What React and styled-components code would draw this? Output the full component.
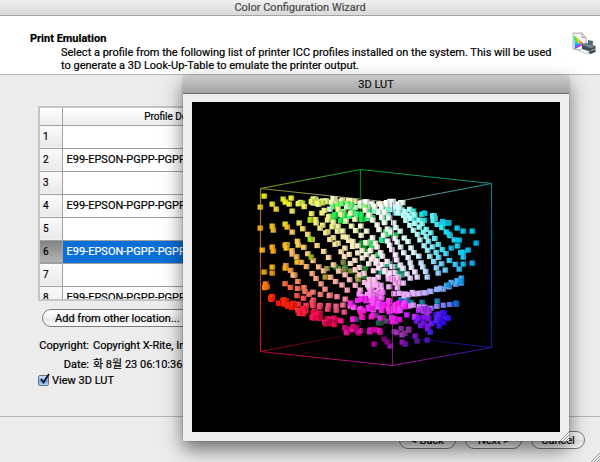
import React, { useState } from "react";
import styled, { createGlobalStyle } from "styled-components";

const GlobalStyle = createGlobalStyle`
    * {
        box-sizing: border-box;
    }

    body {
        margin: 0;
        background: #ececec;
        color: #000;
        font-family: Roboto, "Noto Sans CJK KR", sans-serif;
        font-size: 11px;
        line-height: 13px;
        -webkit-text-stroke: 0.2px;
    }
`;

const Wizard = styled.div`
    position: relative;
    display: flex;
    flex-direction: column;
    min-height: 100vh;
    overflow: hidden;
`;

const TitleBar = styled.header`
    height: ${(props) => (props.$inactive ? "16px" : "18px")};
    line-height: ${(props) => (props.$inactive ? "16px" : "18px")};
    text-align: center;
    color: ${(props) => (props.$inactive ? "#4a4a4a" : "#111")};
    background: ${(props) =>
        props.$inactive
            ? "linear-gradient(#efefef, #d9d9d9)"
            : "linear-gradient(#c9c9c9, #a4a4a4)"};
    border-bottom: 1px solid ${(props) => (props.$inactive ? "#a3a3a3" : "#6e6e6e")};
`;

const Intro = styled.section`
    display: flex;
    justify-content: space-between;
    padding: 16px 4px 2px 30px;
    height: 59px;
    background: #fff;
    border-bottom: 1px solid #b4b4b4;
`;

const IntroTitle = styled.h1`
    margin: 0;
    font-size: 11px;
    line-height: 13px;
`;

const IntroText = styled.p`
    margin: 1px 0 0 31px;
    max-width: 498px;
`;

const Content = styled.main`
    flex: 1;
    padding: 31px 38px 0;
    border-bottom: 1px solid #b4b4b4;
`;

const TableFrame = styled.div`
    height: 195px;
    overflow: hidden;
    border: 2px solid #c4c4c4;
    background: #fff;
`;

const Table = styled.table`
    width: 100%;
    border-collapse: collapse;
    table-layout: fixed;
`;

const HeadCell = styled.th`
    width: ${(props) => props.$width || "auto"};
    height: 17px;
    padding: 0;
    font-size: 10px;
    font-weight: 400;
    background: linear-gradient(#fff, #ececec);
    border-right: 1px solid #a0a0a0;
    border-bottom: 1px solid #a0a0a0;
`;

const RowNumber = styled.th`
    height: 23px;
    padding: 0 0 0 3px;
    font-size: 10px;
    font-weight: 400;
    text-align: left;
    background: ${(props) =>
        props.$selected
            ? "linear-gradient(#828282, #b4b4b4)"
            : "linear-gradient(#fafafa, #e9e9e9)"};
    border-right: 1px solid #a0a0a0;
    border-bottom: 1px solid #a0a0a0;
`;

const Cell = styled.td`
    padding: 0 4px;
    white-space: nowrap;
    color: ${(props) => (props.$selected ? "#fff" : "#000")};
    background: ${(props) => (props.$selected ? "#0b6fd8" : "#fff")};
    border-bottom: 1px solid #a0a0a0;
`;

const PillButton = styled.button`
    height: 18px;
    padding: 0 12px;
    font: inherit;
    -webkit-text-stroke: inherit;
    line-height: 15px;
    color: #000;
    border: 1px solid #7b7b7b;
    border-radius: 9px;
    background: linear-gradient(#fff, #f0f0f0 50%, #e6e6e6 51%, #fdfdfd);
`;

const AddButton = styled(PillButton)`
    display: block;
    margin: 8px 4px 9px;
`;

const Details = styled.dl`
    display: grid;
    grid-template-columns: 51px 1fr;
    gap: 0 4px;
    margin: 0;
    line-height: 19px;
`;

const Term = styled.dt`
    text-align: right;
    white-space: nowrap;
`;

const Value = styled.dd`
    margin: 0;
    height: 19px;
`;

const CheckLabel = styled.label`
    display: flex;
    align-items: center;
    gap: 3px;
    height: 12px;
    margin: 0 0 28px;
`;

const CheckBox = styled.span`
    position: relative;
    width: 11px;
    height: 11px;

    input {
        appearance: none;
        display: block;
        width: 11px;
        height: 11px;
        margin: 0;
        border: 1px solid #666f80;
        border-radius: 2px;
        background: #fff;
    }

    input:checked {
        background: linear-gradient(#c9defa, #6fa9ea 60%, #a8dcff);
    }

    svg {
        position: absolute;
        left: 1px;
        top: -2px;
        pointer-events: none;
    }
`;

const Footer = styled.footer`
    display: flex;
    justify-content: flex-end;
    gap: 9px;
    padding: 14px 15px 13px;
`;

const FooterButton = styled(PillButton)`
    width: ${(props) => props.$width || "57px"};
    padding: 0;
`;

const LutWindow = styled.section`
    position: absolute;
    z-index: 1;
    top: 76px;
    left: 183px;
    right: 31px;
    bottom: 21px;
    display: flex;
    flex-direction: column;
    background: #eee;
    box-shadow: 0 8px 18px rgba(0, 0, 0, 0.55), 0 0 1px rgba(0, 0, 0, 0.5);
`;

const Viewport = styled.div`
    flex: 1;
    min-height: 0;
    margin: 8px 9px 9px;
    background: #000;

    svg {
        display: block;
        width: 100%;
        height: 100%;
    }
`;

const Grip = styled.svg`
    position: absolute;
    right: 0;
    bottom: 0;
`;

const profiles = ["", "E99-EPSON-PGPP-PGPP-", "", "E99-EPSON-PGPP-PGPP-", "", "E99-EPSON-PGPP-PGPP-", "", "E99-EPSON-PGPP-PGPP-"];

// cube edges: x1, y1, x2, y2, start colour, end colour
const edges = [
    [260, 188, 360, 169, "#8f9a20", "#00a020"],
    [360, 169, 491, 183, "#00a020", "#109090"],
    [260, 188, 392, 202, "#8f8a30", "#a09a90"],
    [491, 183, 392, 202, "#109090", "#909a98"],
    [360, 169, 360, 332, "#009020", "#001808"],
    [360, 332, 260, 351, "#180000", "#a00820"],
    [360, 332, 491, 347, "#000010", "#1818a0"],
    [260, 188, 260, 351, "#989020", "#c01020"],
    [491, 183, 491, 347, "#107c84", "#101c90"],
    [260, 351, 392, 365, "#b00828", "#a8109c"],
    [392, 365, 491, 347, "#a8109c", "#281498"],
];

const topCurve = [[260, 193], [285, 198], [320, 198], [392, 202], [420, 213], [450, 222], [478, 231]];
const bottomCurve = [[260, 285], [272, 300], [300, 312], [340, 325], [374, 336], [395, 336], [425, 334], [445, 328], [458, 320], [478, 310]];

const columns = [262, 300, 340, 380, 415, 445, 475];
const tones = [
    ["ece820", "f4f050", "eeffa0", "ffffff", "90fff4", "18e8f0", "10c8f0"],
    ["f0c010", "f2e060", "f0f0a0", "f8fff4", "d0fff8", "30d8f4", "00c0f0"],
    ["f2a410", "f6c060", "f8dcb0", "ffe8f8", "e8e0ff", "78c8ff", "00a8e8"],
    ["f06810", "f88858", "f898a8", "ff88ff", "e0a0ff", "8094ff", "0880e0"],
    ["ff2800", "fa1840", "ea1068", "d400c8", "8a10cc", "3410e8", "1414d8"],
].map((row) => row.map((hex) => [0, 2, 4].map((i) => parseInt(hex.slice(i, i + 2), 16))));

// dots behind the front faces: centre, spread, count, colours
const backClusters = [
    [383, 203, 24, 2, 22, ["#fff", "#ffffe8", "#f0fff8"]],
    [330, 201, 26, 3, 22, ["#e4f890", "#f4f8b0", "#f8f8c0"]],
    [310, 202, 14, 3, 8, ["#c8f040", "#e8f060"]],
    [348, 208, 22, 5, 18, ["#80ff60", "#60ff70", "#c8ffd0"]],
    [352, 217, 24, 5, 20, ["#20f050", "#30ff80", "#18e848"]],
    [378, 215, 14, 8, 14, ["#30f0a0", "#80ffd0", "#20dd70"]],
    [385, 232, 12, 10, 9, ["#10e040", "#40f070", "#30e0a0"]],
    [402, 212, 12, 5, 9, ["#80ffe8", "#30f0d0"]],
    [424, 217, 12, 5, 9, ["#10e8f0", "#50f4f8"]],
    [442, 223, 9, 2, 6, ["#00d8f0", "#10c8e8"]],
    [368, 250, 12, 9, 9, ["#10c840", "#30e060", "#10a030"]],
    [345, 272, 22, 10, 12, ["#208830", "#98a040", "#788840"]],
    [394, 272, 16, 12, 9, ["#10a878", "#28a080", "#30b898"]],
    [413, 301, 16, 3, 7, ["#1080a0", "#2070b8"]],
    [375, 320, 20, 5, 6, ["#444", "#186050", "#584070"]],
];

const frontClusters = [
    [385, 284, 18, 8, 20, ["#ffc0f8", "#ffa8f8", "#e8b0f0"]],
    [372, 295, 14, 5, 24, ["#ff90ff", "#ff70ff", "#ff90f8"]],
    [372, 304, 22, 7, 34, ["#ff20f8", "#ff50ff", "#f820f0"]],
    [392, 306, 18, 7, 18, ["#ff18ff", "#f040ff", "#ff30f0"]],
    [266, 286, 4, 3, 4, ["#ff8010", "#f07008"]],
    [272, 296, 2, 4, 6, ["#ff3008", "#ff2008"]],
    [282, 302, 4, 3, 8, ["#ff2808", "#ff1018"]],
    [291, 306, 4, 3, 8, ["#ff1818", "#f82010"]],
    [302, 311, 5, 4, 9, ["#ff1840", "#ff3030"]],
    [316, 315, 7, 4, 12, ["#ff1058", "#e80840"]],
    [332, 321, 9, 4, 14, ["#e80858", "#c80840", "#ff1888"]],
    [352, 330, 11, 4, 12, ["#d80078", "#e810a0", "#b00868"]],
    [361, 316, 13, 6, 8, ["#f818b8", "#f020e0"]],
    [374, 331, 8, 2, 6, ["#d00898", "#e010c0"]],
    [395, 320, 9, 6, 6, ["#f000e8", "#d820e0"]],
    [418, 313, 14, 5, 12, ["#c028ff", "#a838f0"]],
    [424, 323, 12, 6, 10, ["#8010f0", "#7018e8"]],
    [441, 318, 7, 6, 18, ["#3010ff", "#3008e0", "#5820f0"]],
    [402, 331, 10, 4, 7, ["#803098", "#a030b0"]],
];

// strands of dots that run down over the front faces
const strands = [
    [[305, 207], [333, 237], [360, 267], [374, 284]],
    [[318, 205], [332, 226], [353, 246], [378, 277]],
    [[325, 211], [347, 237], [367, 255], [388, 275]],
    [[337, 210], [360, 236], [374, 257], [397, 282]],
    [[350, 213], [372, 238], [383, 257], [403, 283]],
    [[365, 210], [387, 240], [397, 260], [410, 278]],
    [[375, 207], [388, 228], [407, 257], [417, 277]],
    [[382, 207], [400, 232], [418, 257], [427, 277]],
    [[392, 203], [410, 225], [427, 250], [438, 273]],
    [[400, 207], [423, 232], [438, 257], [445, 270]],
    [[410, 210], [435, 238], [450, 260], [459, 269]],
    [[432, 220], [450, 235], [463, 257]],
    [[298, 222], [312, 239], [339, 270], [360, 290]],
    [[298, 241], [318, 267], [347, 290]],
    [[286, 245], [307, 267], [330, 295]],
    [[285, 265], [303, 287], [313, 300]],
    [[310, 219], [325, 233], [350, 263], [370, 288]],
    [[393, 294], [430, 292], [461, 283]],
    [[397, 304], [430, 308], [456, 304]],
    [[403, 296], [431, 292], [461, 278]],
    [[284, 284], [305, 291], [345, 299]],
    [[296, 296], [320, 305], [350, 306]],
    [[286, 301], [312, 306], [344, 312]],
];

const strays = [
    [264, 196, "#e8e820"], [260, 207, "#e0c018"], [260, 228, "#f0a810"], [262, 250, "#ffb010"],
    [272, 204, "#f0e020"], [276, 209, "#f0d030"], [283, 199, "#e8e020"], [285, 202, "#f0f020"],
    [291, 198, "#f0f030"], [289, 204, "#f0f030"], [292, 211, "#f0e060"], [272, 226, "#f0c010"],
    [273, 230, "#e8b830"], [285, 224, "#e8e020"], [287, 227, "#f0c020"], [292, 232, "#f8c860"],
    [272, 247, "#f8b010"], [273, 251, "#f0a818"], [285, 245, "#f0c010"], [286, 248, "#f8c020"],
    [292, 254, "#f8b860"], [264, 272, "#d8a810"], [272, 267, "#f0b010"], [272, 273, "#e89810"],
    [285, 268, "#f8b010"], [297, 262, "#f8c020"], [293, 275, "#f8b878"], [310, 220, "#b0e010"],
    [310, 239, "#a0e818"], [311, 257, "#a0b020"], [325, 277, "#a89830"], [298, 245, "#f0d050"],
    [457, 228, "#00d0f0"], [472, 231, "#00c8f0"], [463, 231, "#00c8e8"], [449, 234, "#18d0e8"],
    [476, 243, "#00b0e8"], [463, 252, "#10c8f8"], [468, 250, "#10b8f0"], [459, 240, "#00c8f0"],
    [472, 263, "#10a8f0"], [463, 264, "#00c0f0"], [451, 248, "#10b8e8"], [461, 281, "#1098e8"],
    [448, 285, "#1098e0"], [456, 303, "#1068e0"], [437, 301, "#1888c0"], [439, 326, "#3018e0"],
    [430, 332, "#4020e8"], [427, 340, "#5010c0"], [415, 336, "#8010c0"], [402, 342, "#9010b8"],
    [405, 344, "#7010a0"], [390, 346, "#a010b0"], [374, 344, "#a80090"], [384, 339, "#780070"],
    [387, 342, "#8c0090"], [417, 341, "#502098"], [393, 321, "#ff18f0"], [380, 318, "#f018e8"],
];

const curveAt = (curve, x) => {
    const i = Math.max(1, curve.findIndex((point) => point[0] >= x));
    const [x0, y0] = curve[i - 1];
    const [x1, y1] = curve[i];
    return y0 + ((y1 - y0) * (x - x0)) / (x1 - x0);
};

const toneAt = (x, y) => {
    const top = curveAt(topCurve, x);
    const t = Math.max(0, Math.min(1, (y - top) / (curveAt(bottomCurve, x) - top)));
    const c = Math.max(1, columns.findIndex((col) => col >= Math.min(x, 475)));
    const s = Math.max(0, Math.min(1, (x - columns[c - 1]) / (columns[c] - columns[c - 1])));
    const r = Math.min(3, Math.floor(t * 4));
    const v = t * 4 - r;
    const mixed = [0, 1, 2].map((i) => {
        const upper = tones[r][c - 1][i] * (1 - s) + tones[r][c][i] * s;
        const lower = tones[r + 1][c - 1][i] * (1 - s) + tones[r + 1][c][i] * s;
        return Math.round(upper * (1 - v) + lower * v);
    });
    return `rgb(${mixed.join(",")})`;
};

const buildPoints = () => {
    let seed = 17;
    const random = () => {
        seed = (seed * 16807) % 2147483647;
        return seed / 2147483647;
    };
    const scatter = (clusters) =>
        clusters.flatMap(([cx, cy, rx, ry, count, colors]) =>
            Array.from({ length: count }, (_, i) => {
                const angle = random() * Math.PI * 2;
                const radius = Math.sqrt(random());
                return [
                    cx + Math.cos(angle) * radius * rx,
                    cy + Math.sin(angle) * radius * ry,
                    colors[i % colors.length],
                ];
            })
        );

    const strandPoints = [];
    strands.forEach((strand) => {
        for (let k = 1; k < strand.length; k++) {
            const [x0, y0] = strand[k - 1];
            const [x1, y1] = strand[k];
            const steps = Math.round(Math.hypot(x1 - x0, y1 - y0) / (x0 > 360 ? 6 : 7.5));
            for (let n = 0; n < steps; n++) {
                const x = x0 + ((x1 - x0) * n) / steps + (random() - 0.5) * 2;
                const y = y0 + ((y1 - y0) * n) / steps + (random() - 0.5) * 2;
                strandPoints.push([x, y, toneAt(x, y)]);
            }
        }
        const [x, y] = strand[strand.length - 1];
        strandPoints.push([x, y, toneAt(x, y)]);
    });

    return [...scatter(backClusters), ...strandPoints, ...scatter(frontClusters), ...strays];
};

const points = buildPoints();

const LutCube = () => (
    <svg viewBox="192 102 368 330" role="img" aria-label="3D LUT">
        <defs>
            {edges.map(([x1, y1, x2, y2, from, to], i) => (
                <linearGradient key={i} id={`edge${i}`} gradientUnits="userSpaceOnUse" x1={x1} y1={y1} x2={x2} y2={y2}>
                    <stop offset="0" stopColor={from} />
                    <stop offset="1" stopColor={to} />
                </linearGradient>
            ))}
        </defs>
        {edges.map(([x1, y1, x2, y2], i) => (
            <path key={i} d={`M${x1 + 0.5} ${y1 + 0.5}L${x2 + 0.5} ${y2 + 0.5}`} stroke={`url(#edge${i})`} strokeWidth="1.2" />
        ))}
        {points.map(([x, y, color], i) => (
            <g key={i} transform={`translate(${x - 2.5} ${y - 2.5})`}>
                <rect width="5.6" height="5.2" fill={color} />
                <rect x="3.8" width="1.8" height="5.2" fill="#000" opacity="0.22" />
            </g>
        ))}
        <path d="M392.5 202V365" stroke="#b030a8" opacity="0.65" />
    </svg>
);

const PrinterIcon = () => (
    <svg width="24" height="24" viewBox="0 0 24 24" aria-hidden="true">
        <defs>
            <linearGradient id="gamutA" x1="0" y1="0" x2="0" y2="1">
                <stop offset="0" stopColor="#20e020" />
                <stop offset="0.45" stopColor="#18e8d8" />
                <stop offset="1" stopColor="#2848ff" />
            </linearGradient>
            <linearGradient id="gamutB" x1="0" y1="0" x2="1" y2="0">
                <stop offset="0" stopColor="#60f000" />
                <stop offset="0.5" stopColor="#ffd000" />
                <stop offset="1" stopColor="#ff0060" />
            </linearGradient>
        </defs>
        <path d="M1 1h9l4 4.500V19L1 17Z" fill="#f3f3f3" stroke="#999" strokeWidth="0.8" />
        <path d="M10 1v4.500h4" fill="#ddd" stroke="#999" strokeWidth="0.8" />
        <path d="M2 3.500L12 12L3 17Z" fill="url(#gamutA)" />
        <path d="M2 3.500L12 12L6 11Z" fill="url(#gamutB)" />
        <path d="M6 13L12 12L4 16.500Z" fill="#f020e0" />
        <path d="M16 8l5 1-.5 7-5-1Z" fill="#546573" />
        <path d="M10 13l4-2 9.500 3v6l-5 2L10 18Z" fill="#3c4852" />
        <path d="M10 13l4-2 9.500 3-4.500 2.500Z" fill="#718391" />
        <path d="M6 18.500l4-1.500 8 2.500-4 2.500Z" fill="#f4f4f4" stroke="#aaa" strokeWidth="0.6" />
        <path d="M19 18.500l4-1.500" stroke="#a9b5bd" />
    </svg>
);

const ResizeGrip = () => (
    <Grip width="10" height="10" viewBox="0 0 10 10" aria-hidden="true">
        <path d="M1 10L10 1M4 10L10 4M7 10L10 7" stroke="#888" strokeWidth="0.9" />
        <path d="M2 10L10 2M5 10L10 5" stroke="#fff" strokeWidth="0.6" />
    </Grip>
);

const ProfileTable = ({ selected, onSelect }) => (
    <TableFrame>
        <Table>
            <thead>
                <tr>
                    <HeadCell $width="22px" />
                    <HeadCell $width="246px">Profile Description</HeadCell>
                    <HeadCell />
                </tr>
            </thead>
            <tbody>
                {profiles.map((name, index) => (
                    <tr key={index} onClick={() => onSelect(index)}>
                        <RowNumber scope="row" $selected={index === selected}>
                            {index + 1}
                        </RowNumber>
                        <Cell $selected={index === selected}>{name}</Cell>
                        <Cell $selected={index === selected} />
                    </tr>
                ))}
            </tbody>
        </Table>
    </TableFrame>
);

const App = () => {
    const [selected, setSelected] = useState(5);
    const [showLut, setShowLut] = useState(true);

    return (
        <>
            <GlobalStyle />
            <Wizard>
                <TitleBar $inactive>Color Configuration Wizard</TitleBar>
                <Intro>
                    <div>
                        <IntroTitle>Print Emulation</IntroTitle>
                        <IntroText>
                            Select a profile from the following list of printer ICC profiles installed on the
                            system. This will be used to generate a 3D Look-Up-Table to emulate the printer output.
                        </IntroText>
                    </div>
                    <PrinterIcon />
                </Intro>
                <Content>
                    <ProfileTable selected={selected} onSelect={setSelected} />
                    <AddButton type="button">Add from other location...</AddButton>
                    <Details>
                        <Term>Copyright:</Term>
                        <Value>Copyright X-Rite, Inc.</Value>
                        <Term>Date:</Term>
                        <Value>화 8월 23 06:10:36</Value>
                    </Details>
                    <CheckLabel>
                        <CheckBox>
                            <input
                                type="checkbox"
                                checked={showLut}
                                onChange={() => setShowLut(!showLut)}
                            />
                            {showLut && (
                                <svg width="12" height="12" viewBox="0 0 12 12" aria-hidden="true">
                                    <path d="M2 6l2.500 3.500L10 1" fill="none" stroke="#111" strokeWidth="1.800" />
                                </svg>
                            )}
                        </CheckBox>
                        View 3D LUT
                    </CheckLabel>
                </Content>
                <Footer>
                    <FooterButton type="button">&lt; Back</FooterButton>
                    <FooterButton type="button">Next &gt;</FooterButton>
                    <FooterButton type="button" $width="54px">Cancel</FooterButton>
                </Footer>
                <ResizeGrip />
                {showLut && (
                    <LutWindow>
                        <TitleBar>3D LUT</TitleBar>
                        <Viewport>
                            <LutCube />
                        </Viewport>
                        <ResizeGrip />
                    </LutWindow>
                )}
            </Wizard>
        </>
    );
};

export default App;
